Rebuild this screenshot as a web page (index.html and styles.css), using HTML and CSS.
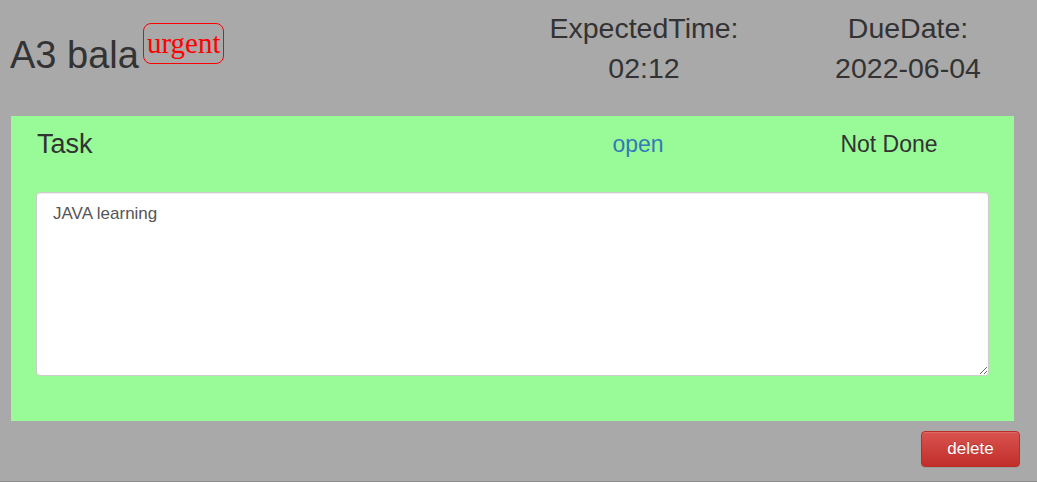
FILE: index.html
```html
<!DOCTYPE html>
<html>
<head>
<meta charset="utf-8">
<link rel="stylesheet" href="styles.css">
</head>
<body>
<div class="card">
  <div class="card-head">
    <h1 class="title">A3 bala<span class="badge">urgent</span></h1>
    <div class="meta">
      <div class="meta-label">ExpectedTime:</div>
      <div class="meta-value">02:12</div>
    </div>
    <div class="meta">
      <div class="meta-label">DueDate:</div>
      <div class="meta-value">2022-06-04</div>
    </div>
  </div>
  <div class="panel">
    <div class="panel-row">
      <div class="panel-title">Task</div>
      <div class="panel-col"><a class="status-link" href="#">open</a></div>
      <div class="panel-col done">Not Done</div>
    </div>
    <textarea class="notes">JAVA learning</textarea>
  </div>
  <div class="actions">
    <button class="btn-delete">delete</button>
  </div>
</div>
</body>
</html>
```
FILE: styles.css
```css
html, body {
  margin: 0;
  padding: 0;
}
body {
  font-family: "Liberation Sans", Arial, sans-serif;
  color: #333;
  background: #fff;
}
.card {
  width: 1037px;
  height: 482px;
  box-sizing: border-box;
  background: #a9a9a9;
  border-bottom: 1px solid #8c8c8c;
}
.card-head {
  height: 116px;
  box-sizing: border-box;
  padding-top: 8px;
  display: flex;
  align-items: flex-start;
}
.title {
  flex: 1;
  margin: 15px 0 0 10px;
  font-size: 38px;
  font-weight: normal;
  line-height: 40px;
}
.badge {
  display: inline-block;
  margin-left: 4px;
  padding: 3px 3px;
  border: 1px solid #f00;
  border-radius: 8px;
  font-family: "Liberation Serif", "Times New Roman", serif;
  font-size: 29px;
  line-height: normal;
  color: #f00;
  vertical-align: 15px;
}
.meta {
  width: 200px;
  text-align: center;
  font-size: 28.5px;
  line-height: 40px;
}
.meta + .meta {
  margin-left: 64px;
  margin-right: 29px;
}
.panel {
  margin: 0 23px 0 11px;
  height: 305px;
  box-sizing: border-box;
  background: #98fb98;
  padding: 8px 25px 0 25px;
}
.panel-row {
  display: flex;
  align-items: center;
  height: 40px;
}
.panel-title {
  flex: 1;
  padding-left: 1px;
  font-size: 27px;
}
.panel-col {
  width: 200px;
  text-align: center;
  font-size: 23px;
}
.panel-col.done {
  margin-left: 51px;
  margin-right: 0;
}
.status-link {
  color: #337ab7;
  text-decoration: none;
}
.notes {
  display: block;
  margin-top: 28px;
  width: 953px;
  height: 184px;
  box-sizing: border-box;
  padding: 9px 16px;
  border: 1px solid #ccc;
  border-radius: 4px;
  box-shadow: inset 0 1px 1px rgba(0, 0, 0, 0.075);
  font-family: "Liberation Sans", Arial, sans-serif;
  font-size: 17px;
  line-height: 1.42857;
  color: #555;
  background: #fff;
}
.actions {
  display: flex;
  justify-content: flex-end;
  padding: 10px 17px 0 0;
}
.btn-delete {
  width: 99px;
  height: 36px;
  border: 1px solid #b92c28;
  border-radius: 4px;
  background: linear-gradient(to bottom, #d9534f 0%, #c12e2a 100%);
  color: #fff;
  font-family: "Liberation Sans", Arial, sans-serif;
  font-size: 17px;
  padding: 0;
  box-shadow: inset 0 1px 0 rgba(255, 255, 255, 0.15), 0 1px 1px rgba(0, 0, 0, 0.075);
  text-shadow: 0 -1px 0 rgba(0, 0, 0, 0.2);
}
```
